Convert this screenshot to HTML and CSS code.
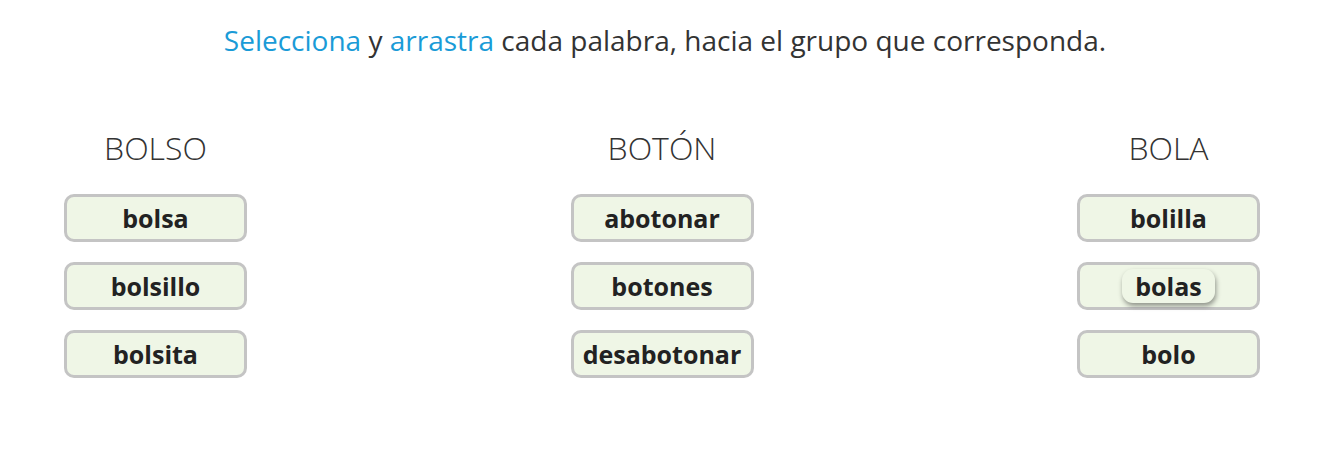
FILE: index.html
```html
<!DOCTYPE html>
<html lang="es">
<head>
<meta charset="utf-8">
<link rel="stylesheet" href="styles.css">
</head>
<body>
<main class="activity">
  <p class="instructions"><span class="hl">Selecciona</span> y <span class="hl">arrastra</span> cada palabra, hacia el grupo que corresponda.</p>
  <div class="groups">
    <section class="group">
      <h2 class="group-title">BOLSO</h2>
      <div class="slot"><span class="word">bolsa</span></div>
      <div class="slot"><span class="word">bolsillo</span></div>
      <div class="slot"><span class="word">bolsita</span></div>
    </section>
    <section class="group">
      <h2 class="group-title">BOTÓN</h2>
      <div class="slot"><span class="word">abotonar</span></div>
      <div class="slot"><span class="word">botones</span></div>
      <div class="slot"><span class="word">desabotonar</span></div>
    </section>
    <section class="group">
      <h2 class="group-title">BOLA</h2>
      <div class="slot"><span class="word">bolilla</span></div>
      <div class="slot"><span class="word chip">bolas</span></div>
      <div class="slot"><span class="word">bolo</span></div>
    </section>
  </div>
</main>
</body>
</html>
```
FILE: styles.css
```css
html, body {
  margin: 0;
  padding: 0;
  background: #ffffff;
}
body {
  font-family: "Open Sans", "Noto Sans", "DejaVu Sans", sans-serif;
  color: #222222;
}
.activity {
  width: 1330px;
  height: 457px;
}
.instructions {
  margin: 0;
  padding-top: 21px;
  text-align: center;
  font-size: 28px;
  line-height: 38px;
  color: #333333;
  letter-spacing: 0;
}
.hl {
  color: #1a9bd7;
}
.groups {
  display: flex;
  justify-content: space-between;
  padding: 67px 70px 0 64px;
}
.group {
  width: 183px;
  display: flex;
  flex-direction: column;
  gap: 20px;
}
.group-title {
  margin: 0 0 4px 0;
  text-align: center;
  font-weight: 300;
  font-size: 32px;
  line-height: 44px;
  color: #333333;
}
.slot {
  box-sizing: border-box;
  height: 48px;
  border: 3px solid #c4c4c4;
  border-radius: 10px;
  background: #eff6e6;
  display: flex;
  align-items: center;
  justify-content: center;
}
.word {
  font-weight: 700;
  font-size: 25px;
  line-height: 30px;
  color: #222222;
}
.chip {
  background: #eff6e6;
  border-radius: 11px;
  padding: 2px 13px;
  box-shadow: 1px 3px 5px rgba(0, 0, 0, 0.4);
}
```
